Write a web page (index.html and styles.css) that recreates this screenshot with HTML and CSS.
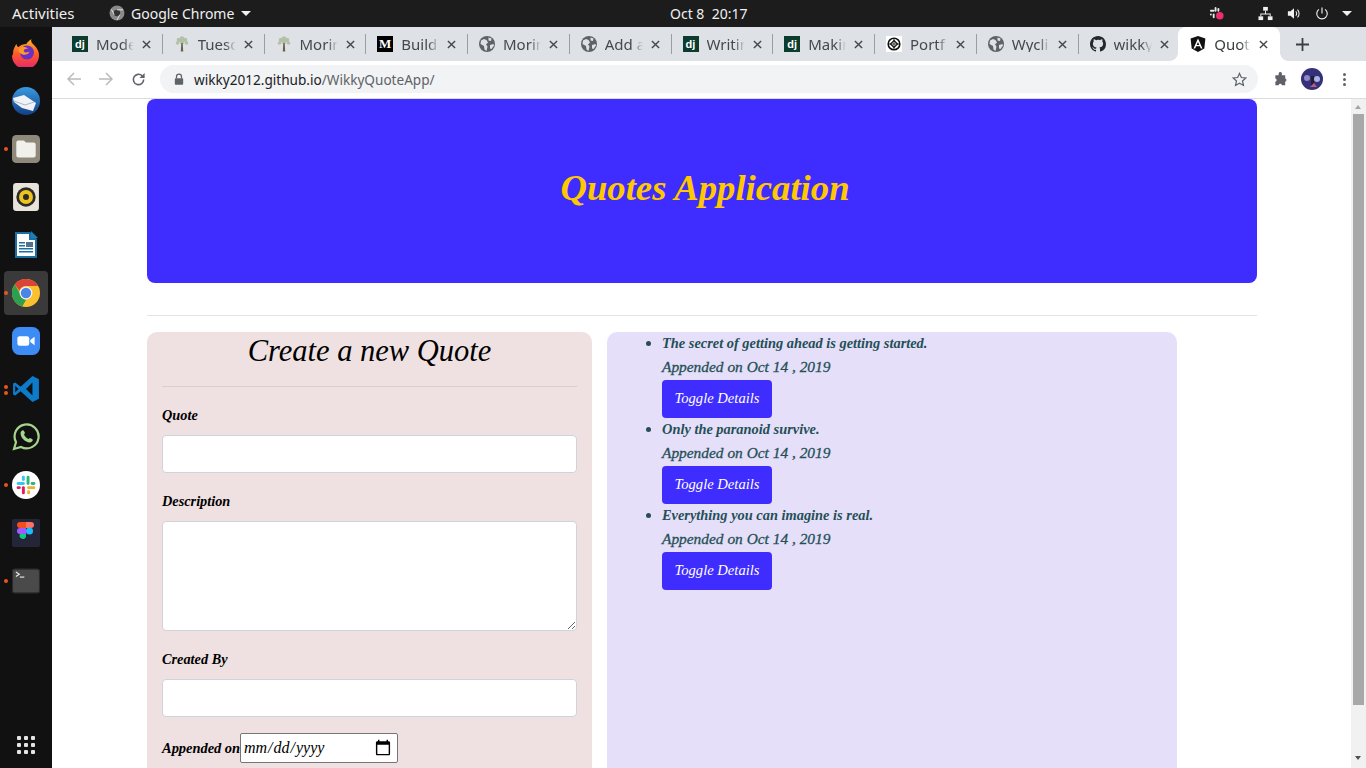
FILE: index.html
```html
<!DOCTYPE html>
<html lang="en">
<head>
<meta charset="utf-8">
<title>Quotes Application</title>
<link rel="stylesheet" href="styles.css">
</head>
<body>
<svg class="defs-holder" viewBox="0 0 16 16">
  <symbol id="globe" viewBox="0 0 16 16"><circle cx="8" cy="8" r="8" fill="#5f6368"/><path d="M2 4.500l3-1.500 2.500 1L9 6.500 7 8.500l1.500 2L7.500 15l-2-1.500-.5-3.500L1.500 8zM9.500 1.500l3 1-.5 2.500-2.500-.5zM11 9l3.500-1 .5 1.500-2.500 3.500-1.500-.5z" fill="#dee1e6"/></symbol>
  <symbol id="close" viewBox="0 0 10 10"><path d="M1 1l8 8M9 1l-8 8" stroke="#45494e" stroke-width="1.600" fill="none"/></symbol>
  <symbol id="tree" viewBox="0 0 16 16"><g fill="#b4c0a8"><circle cx="5" cy="4" r="2.300"/><circle cx="11" cy="4" r="2.300"/><circle cx="8" cy="2.500" r="2.200"/><circle cx="3.500" cy="7" r="1.800"/><circle cx="12.500" cy="7" r="1.800"/><circle cx="8" cy="6" r="2.200"/></g><path d="M7.300 7h1.400l.5 8.500H6.800z" fill="#6b6048"/></symbol>
</svg>

<div class="topbar">
  <div class="top-left">
    <span class="activities">Activities</span>
    <span class="appname">
      <svg class="chrome-mono" viewBox="0 0 16 16"><circle cx="8" cy="8" r="7.500" fill="#8a8a8a"/><circle cx="8" cy="8" r="3.200" fill="#333"/><path d="M8 4.800h6M5.200 9.600 2.400 4.400M10.800 9.600 8 15" stroke="#ddd" stroke-width="1" fill="none"/></svg>
      Google Chrome
      <span class="caret"></span>
    </span>
  </div>
  <div class="clock">Oct 8&nbsp; 20:17</div>
  <div class="tray">
    <svg class="tray-slack" viewBox="0 0 16 16"><g fill="#e8e8e8"><rect x="1" y="4" width="5" height="2" rx="1"/><rect x="6" y="1" width="2" height="5" rx="1"/><rect x="1" y="8" width="2" height="2" rx="1"/><rect x="4" y="8" width="2" height="5" rx="1"/><rect x="9" y="2" width="2" height="4" rx="1"/></g><circle cx="11.500" cy="10.500" r="4" fill="#ee2f6e"/></svg>
    <svg class="tray-net" viewBox="0 0 16 16"><g fill="#f0f0f0"><rect x="5.500" y="1" width="5" height="4"/><rect x="0.500" y="11" width="5" height="4"/><rect x="10.500" y="11" width="5" height="4"/><path d="M7.500 5h1v3h5v3h-1V9H3.500v2h-1V8h5z"/></g></svg>
    <svg class="tray-vol" viewBox="0 0 16 16"><path d="M1 5.500h3L8 2v12L4 10.500H1z" fill="#f0f0f0"/><path d="M10 5.500a3.500 3.500 0 0 1 0 5M12 3.500a6.500 6.500 0 0 1 0 9" stroke="#f0f0f0" fill="none" stroke-width="1.200"/></svg>
    <svg class="tray-power" viewBox="0 0 16 16"><path d="M8 1v7" stroke="#f0f0f0" stroke-width="1.300"/><path d="M4.500 3.300a6 6 0 1 0 7 0" stroke="#f0f0f0" stroke-width="1.300" fill="none"/></svg>
    <span class="caret"></span>
  </div>
</div>

<div class="desktop">
  <nav class="dock">
    <div class="dock-list">
      <div class="dock-item"><svg viewBox="0 0 28 28"><defs><linearGradient id="ff" x1="0.500" y1="0" x2="0.500" y2="1"><stop offset="0" stop-color="#ffb81f"/><stop offset="0.5" stop-color="#ff5a2b"/><stop offset="1" stop-color="#e3246e"/></linearGradient></defs><path d="M1 15C1 10 3 7 4.500 5c.2 2 1 3 2 3 2-2 5-3 8-3 0-1 2-3 5-5-1 2 0 4 2.500 6 3 3 5 6 5 10a13.500 13.500 0 0 1-27 1z" fill="url(#ff)"/><circle cx="15" cy="13.500" r="7" fill="#6a2fc4"/><path d="M6.500 10c3-3 7-2.500 10-.5-3 0-5.500 1-4.500 3 1 1.500 3.500 1 5.500 0-1 3.500-6.500 4.500-9.500 1.500-1.500-1.500-1.500-3-1.500-4z" fill="#ff9a2b"/></svg></div>
      <div class="dock-item"><svg viewBox="0 0 28 28"><defs><linearGradient id="tb" x1="0" y1="0" x2="0" y2="1"><stop offset="0" stop-color="#3a9ae0"/><stop offset="1" stop-color="#123f86"/></linearGradient></defs><circle cx="14" cy="14" r="14" fill="url(#tb)"/><path d="M1 11l11-3 12 8-3 8-11-3-8-6z" fill="#f0f2f6"/><path d="M2 14l11 4 9-3" stroke="#a9b6c6" fill="none"/></svg></div>
      <div class="dock-item dock-dot"><svg viewBox="0 0 26 26"><rect width="26" height="26" rx="4" fill="#8e897b"/><path d="M4 7a2 2 0 0 1 2-2h5l2 2h7a2 2 0 0 1 2 2v10a2 2 0 0 1-2 2H6a2 2 0 0 1-2-2z" fill="#f2f0ec"/></svg></div>
      <div class="dock-item"><svg viewBox="0 0 24 26"><rect width="24" height="26" rx="3" fill="#e8e4da"/><circle cx="12" cy="13" r="9" fill="#2a2a2a"/><circle cx="12" cy="13" r="6.500" fill="#eec21f"/><circle cx="12" cy="13" r="2.800" fill="#2a2a2a"/></svg></div>
      <div class="dock-item"><svg viewBox="0 0 24 28"><path d="M1 1h15l7 7v19H1z" fill="#1b6fa3"/><path d="M3 3h12v6h6v16H3z" fill="#fff"/><path d="M17 0l7 7h-7z" fill="#1b80b8"/><path d="M5 11h6v1.500H5zM5 14h6v1.500H5zM5 17h14v1.500H5zM5 20h14v1.500H5z" fill="#1b6fa3"/><rect x="12" y="11" width="7" height="5" fill="#53718a"/></svg></div>
      <div class="dock-item active dock-dot"><svg viewBox="0 0 26 26"><circle cx="13" cy="13" r="13" fill="#fbc02d"/><path d="M13 0a13 13 0 0 1 11.260 6.500H13a6.500 6.500 0 0 0-6.100 4.300L2.700 5A13 13 0 0 1 13 0z" fill="#dc4437"/><path d="M2.700 5l5.600 9.800A6.500 6.500 0 0 0 13 19.500l-3.500 6A13 13 0 0 1 2.700 5z" fill="#2e9e4f"/><circle cx="13" cy="13" r="6" fill="#f2f2f2"/><circle cx="13" cy="13" r="4.800" fill="#4a86e8"/></svg></div>
      <div class="dock-item"><svg viewBox="0 0 26 26"><rect width="26" height="26" rx="7" fill="#3d8bf5"/><rect x="5" y="8.500" width="11" height="9" rx="2" fill="#fff"/><path d="M17 12l4-3v8l-4-3z" fill="#fff"/></svg></div>
      <div class="dock-item dock-dots"><svg viewBox="0 0 26 26"><path d="M19 1l6 3v18l-6 3L8 15l-5 4-2-1V8l2-1 5 4z" fill="#0d7bc9"/><path d="M19 7l-6 6 6 6z" fill="#111"/><path d="M3 10l3 3-3 3z" fill="#111"/></svg></div>
      <div class="dock-item"><svg viewBox="0 0 28 28"><path d="M2 26l2-7a12 12 0 1 1 5 5z" fill="none" stroke="#a5d58c" stroke-width="2.200"/><path d="M9.500 8c1-1 2-1 2.500 0l1 2-1 1.500c1 2 2.500 3.500 4.500 4.500l1.500-1 2 1c1 .5 1 1.500 0 2.500-2 2-6 .5-8.500-2S7.500 10 9.500 8z" fill="#a5d58c"/></svg></div>
      <div class="dock-item dock-dot"><svg viewBox="0 0 24 24"><circle cx="12" cy="12" r="12" fill="#fff"/><rect x="4" y="9.500" width="7" height="2.500" rx="1.200" fill="#36c5f0"/><rect x="8.500" y="4" width="2.500" height="4.500" rx="1.200" fill="#36c5f0"/><rect x="12.500" y="4" width="2.500" height="8" rx="1.200" fill="#2eb67d"/><rect x="16" y="9.500" width="4" height="2.500" rx="1.200" fill="#2eb67d"/><rect x="13" y="13" width="7" height="2.500" rx="1.200" fill="#ecb22e"/><rect x="13" y="16.500" width="2.500" height="3.500" rx="1.200" fill="#ecb22e"/><rect x="8.500" y="13" width="2.500" height="7" rx="1.200" fill="#e01e5a"/><rect x="4" y="13" width="3.500" height="2.500" rx="1.200" fill="#e01e5a"/></svg></div>
      <div class="dock-item"><svg viewBox="0 0 28 28"><rect width="28" height="28" rx="2" fill="#242538"/><path d="M8 3h6v6H8a3 3 0 0 1 0-6z" fill="#f24e1e"/><path d="M14 3h5a3 3 0 0 1 0 6h-5z" fill="#ff7262"/><path d="M8 9h6v6H8a3 3 0 0 1 0-6z" fill="#a259ff"/><circle cx="17.500" cy="12" r="3.500" fill="#1abcfe"/><path d="M8 15h6v3a3 3 0 1 1-6-3z" fill="#0acf83"/></svg></div>
      <div class="dock-item dock-dot"><svg viewBox="0 0 25 22"><rect width="25" height="22" rx="2.500" fill="#4a4a4a"/><rect x=".5" y=".5" width="24" height="21" rx="2" fill="none" stroke="#2b2b2b"/><path d="M3.500 3l3 2-3 2" stroke="#eee" fill="none"/><path d="M7 7.500h4" stroke="#eee"/></svg></div>
    </div>
    <svg class="grid-icon" viewBox="0 0 18 18"><g fill="#e4e4e4"><rect x="0" y="0" width="4" height="4" rx="1"/><rect x="7" y="0" width="4" height="4" rx="1"/><rect x="14" y="0" width="4" height="4" rx="1"/><rect x="0" y="7" width="4" height="4" rx="1"/><rect x="7" y="7" width="4" height="4" rx="1"/><rect x="14" y="7" width="4" height="4" rx="1"/><rect x="0" y="14" width="4" height="4" rx="1"/><rect x="7" y="14" width="4" height="4" rx="1"/><rect x="14" y="14" width="4" height="4" rx="1"/></g></svg>
  </nav>

  <div class="browser">
    <div class="tabstrip">
      <div class="tab"><span class="fav fav-dj">dj</span><span class="tab-title">Mode</span><svg class="x" viewBox="0 0 10 10"><use href="#close"/></svg></div>
      <div class="tab"><svg class="fav" viewBox="0 0 16 16"><use href="#tree"/></svg><span class="tab-title">Tuesd</span><svg class="x" viewBox="0 0 10 10"><use href="#close"/></svg></div>
      <div class="tab"><svg class="fav" viewBox="0 0 16 16"><use href="#tree"/></svg><span class="tab-title">Morin</span><svg class="x" viewBox="0 0 10 10"><use href="#close"/></svg></div>
      <div class="tab"><span class="fav fav-m">M</span><span class="tab-title">Build</span><svg class="x" viewBox="0 0 10 10"><use href="#close"/></svg></div>
      <div class="tab"><svg class="fav" viewBox="0 0 16 16"><use href="#globe"/></svg><span class="tab-title">Morin</span><svg class="x" viewBox="0 0 10 10"><use href="#close"/></svg></div>
      <div class="tab"><svg class="fav" viewBox="0 0 16 16"><use href="#globe"/></svg><span class="tab-title">Add a</span><svg class="x" viewBox="0 0 10 10"><use href="#close"/></svg></div>
      <div class="tab"><span class="fav fav-dj">dj</span><span class="tab-title">Writin</span><svg class="x" viewBox="0 0 10 10"><use href="#close"/></svg></div>
      <div class="tab"><span class="fav fav-dj">dj</span><span class="tab-title">Makin</span><svg class="x" viewBox="0 0 10 10"><use href="#close"/></svg></div>
      <div class="tab"><svg class="fav" viewBox="0 0 16 16"><rect width="16" height="16" rx="1" fill="#fff"/><circle cx="8" cy="8" r="5.800" fill="none" stroke="#111" stroke-width="1.600"/><path d="M8 4.500L11.500 8 8 11.500 4.500 8z" fill="none" stroke="#111" stroke-width="1.200"/><path d="M8 2v12M2 8h12" stroke="#111" stroke-width=".8"/></svg><span class="tab-title">Portf</span><svg class="x" viewBox="0 0 10 10"><use href="#close"/></svg></div>
      <div class="tab"><svg class="fav" viewBox="0 0 16 16"><use href="#globe"/></svg><span class="tab-title">Wycli</span><svg class="x" viewBox="0 0 10 10"><use href="#close"/></svg></div>
      <div class="tab last-plain"><svg class="fav" viewBox="0 0 16 16"><path fill="#24292e" d="M8 0C3.580 0 0 3.580 0 8c0 3.540 2.290 6.530 5.470 7.590.4.070.55-.170.550-.380v-1.340c-2.230.480-2.700-1.070-2.700-1.070-.360-.930-.890-1.170-.890-1.170-.730-.500.060-.490.060-.490.800.060 1.230.830 1.230.830.710 1.220 1.870.870 2.330.660.070-.520.280-.870.510-1.070-1.780-.200-3.640-.890-3.640-3.950 0-.870.310-1.590.820-2.150-.080-.200-.360-1.020.080-2.120 0 0 .670-.210 2.200.820A7.600 7.600 0 0 1 8 3.870c.680 0 1.360.090 2 .270 1.530-1.040 2.200-.820 2.200-.820.440 1.100.160 1.920.080 2.120.510.560.820 1.270.820 2.150 0 3.070-1.870 3.750-3.650 3.950.290.250.540.730.540 1.480v2.190c0 .210.150.460.550.380A8 8 0 0 0 16 8c0-4.420-3.580-8-8-8z"/></svg><span class="tab-title">wikky</span><svg class="x" viewBox="0 0 10 10"><use href="#close"/></svg></div>
      <div class="tab active-tab"><svg class="fav" viewBox="0 0 16 16"><path d="M8 0l7.400 2.600-1.100 9.800L8 16l-6.300-3.600L.6 2.600z" fill="#111"/><path d="M8 2.500L3.500 12.500h1.700l.9-2.300h3.800l.9 2.300h1.700zM8 6l1.300 3H6.700z" fill="#fff"/></svg><span class="tab-title">Quot</span><svg class="x" viewBox="0 0 10 10"><use href="#close"/></svg></div>
      <div class="newtab"><svg class="plus" viewBox="0 0 13 13"><path d="M6.500 0v13M0 6.500h13" stroke="#3c4043" stroke-width="1.800"/></svg></div>
    </div>

    <div class="toolbar">
      <svg class="nav-ic" viewBox="0 0 14 14"><path d="M14 7H1.500M7 1L1 7l6 6" fill="none" stroke="#b8babd" stroke-width="1.500"/></svg>
      <svg class="nav-ic" viewBox="0 0 14 14"><path d="M0 7h12.500M7 1l6 6-6 6" fill="none" stroke="#b8babd" stroke-width="1.500"/></svg>
      <svg class="nav-ic" viewBox="0 0 16 16"><path d="M13.500 8a5.500 5.500 0 1 1-1.600-3.900" fill="none" stroke="#5f6368" stroke-width="1.700"/><path d="M14.500 1v5.500H9z" fill="#5f6368"/></svg>
      <div class="omnibox">
        <svg class="lock" viewBox="0 0 12 14"><path d="M3 6V4a3 3 0 0 1 6 0v2" fill="none" stroke="#5f6368" stroke-width="1.500"/><rect x="1" y="6" width="10" height="8" rx="1" fill="#5f6368"/></svg>
        <span class="url"><span class="host">wikky2012.github.io</span>/WikkyQuoteApp/</span>
        <svg class="star" viewBox="0 0 16 16"><path d="M8 1.500l2 4.400 4.700.5-3.500 3.200 1 4.700L8 11.900l-4.200 2.400 1-4.700L1.300 6.400 6 5.900z" fill="none" stroke="#5f6368" stroke-width="1.300"/></svg>
      </div>
      <svg class="ext" viewBox="0 0 16 16"><path d="M6 1.500a1.800 1.800 0 0 1 3.500 0V3.500H13v3.300a1.800 1.800 0 0 1 0 3.500V14H9.500a1.800 1.800 0 0 0-3.500 0H2.500V10.500a1.800 1.800 0 0 0 0-3.500V3.500H6z" fill="#5f6368"/></svg>
      <svg class="avatar" viewBox="0 0 22 22"><circle cx="11" cy="11" r="11" fill="#35307a"/><circle cx="6" cy="10" r="3" fill="#8d8ac0"/><rect x="10" y="8" width="3" height="11" fill="#211c3c"/><circle cx="16" cy="11" r="3" fill="#a9b3dd"/><path d="M9 19l4-4 3 4z" fill="#c05a7a"/></svg>
      <div class="kebab"><i></i><i></i><i></i></div>
    </div>

    <div class="viewport">
      <main class="page">
        <div class="container">
          <header class="hero"><h1>Quotes Application</h1></header>
          <hr class="rule">
          <div class="columns">
            <section class="form-card">
              <h2>Create a new Quote</h2>
              <hr class="form-rule">
              <label class="lbl">Quote</label>
              <input class="ctl" type="text">
              <label class="lbl">Description</label>
              <textarea class="ctl area"></textarea>
              <label class="lbl">Created By</label>
              <input class="ctl" type="text">
              <div class="date-row">
                <label class="lbl inline">Appended on</label>
                <input class="date" type="date">
              </div>
            </section>
            <section class="list-card">
              <ul class="quotes">
                <li>
                  <div class="q">The secret of getting ahead is getting started.</div>
                  <div class="d">Appended on Oct 14 , 2019</div>
                  <button class="btn">Toggle Details</button>
                </li>
                <li>
                  <div class="q">Only the paranoid survive.</div>
                  <div class="d">Appended on Oct 14 , 2019</div>
                  <button class="btn">Toggle Details</button>
                </li>
                <li>
                  <div class="q">Everything you can imagine is real.</div>
                  <div class="d">Appended on Oct 14 , 2019</div>
                  <button class="btn">Toggle Details</button>
                </li>
              </ul>
            </section>
          </div>
        </div>
      </main>
      <div class="scrollbar">
        <div class="sb-up"></div>
        <div class="sb-thumb"></div>
        <div class="sb-down"></div>
      </div>
    </div>
  </div>
</div>
</body>
</html>
```

FILE: styles.css
```css
* { box-sizing: border-box; }
html, body { margin: 0; height: 768px; overflow: hidden; }
body { font-family: "Noto Sans", "Liberation Sans", sans-serif; background: #111; }
.defs-holder { width: 0; height: 0; position: absolute; }

.topbar {
  height: 27px; background: #1c1c1c; color: #f0f0f0; font-size: 14px;
  display: grid; grid-template-columns: 670px auto 1fr; align-items: center;
  padding-bottom: 1px;
}
.top-left { display: flex; align-items: center; padding-left: 12px; }
.activities { width: 97px; font-size: 15px; }
.appname { display: flex; align-items: center; gap: 6px; }
.chrome-mono { width: 16px; height: 16px; }
.caret { width: 0; height: 0; border-left: 5px solid transparent; border-right: 5px solid transparent; border-top: 5px solid #f0f0f0; display: inline-block; margin-left: 1px; }
.tray { display: flex; align-items: center; justify-content: flex-end; padding-right: 14px; }
.tray-slack { width: 15px; height: 15px; margin-right: 34px; }
.tray-net { width: 15px; height: 15px; margin-right: 14px; }
.tray-vol { width: 14px; height: 15px; margin-right: 14px; }
.tray-power { width: 14px; height: 15px; margin-right: 12px; }

.desktop { display: flex; height: 741px; }
.dock { width: 52px; background: #111; display: flex; flex-direction: column; justify-content: space-between; align-items: center; padding-bottom: 14px; }
.dock-list { display: flex; flex-direction: column; padding-top: 4px; }
.dock-item { width: 44px; height: 44px; margin-bottom: 4px; display: flex; align-items: center; justify-content: center; position: relative; border-radius: 4px; }
.dock-item svg { width: 28px; height: 28px; }
.dock-item.active { background: #3a3a3a; }
.dock-dot::before { content: ""; position: absolute; left: 0; top: 20px; width: 4px; height: 4px; border-radius: 50%; background: #e9541f; }
.dock-dots::before { content: ""; position: absolute; left: 0; top: 18px; width: 4px; height: 4px; border-radius: 50%; background: #e9541f; box-shadow: 0 6px 0 #e9541f; }
.grid-icon { width: 18px; height: 18px; }

.browser { flex: 1; min-width: 0; display: flex; flex-direction: column; background: #fff; }

.tabstrip { height: 34px; background: #dee1e6; display: flex; align-items: flex-start; padding-left: 9px; flex: none; }
.tab { width: 101.750px; height: 34px; padding: 9px 0 0 11px; display: flex; align-items: flex-start; position: relative; font-size: 15px; color: #45494e; flex: none; }
.tab::after { content: ""; position: absolute; right: 0; top: 7px; height: 20px; width: 1px; background: #9a9da2; }
.last-plain::after { display: none; }
.fav { width: 16px; height: 16px; flex: none; }
.fav-dj { background: #0c3c2e; color: #fff; font-size: 11px; font-weight: 700; text-align: center; line-height: 16px; font-family: "Liberation Sans", sans-serif; }
.fav-m { background: #000; color: #fff; font-size: 13px; font-weight: 700; text-align: center; line-height: 16px; font-family: "Liberation Serif", serif; }
.tab-title {
  margin-left: 8px; width: 38px; white-space: nowrap; line-height: 16px; flex: none;
  -webkit-mask-image: linear-gradient(90deg, #000 72%, transparent 100%);
  mask-image: linear-gradient(90deg, #000 72%, transparent 100%);
}
.x { width: 9px; height: 9px; margin-left: 8px; margin-top: 4px; flex: none; }
.active-tab { background: #fff; border-radius: 8px 8px 0 0; color: #3c4043; padding-left: 12px; margin-left: -2px; }
.active-tab .tab-title { width: 37px; }
.active-tab::before,
.active-tab::after { content: ""; position: absolute; top: auto; bottom: 0; width: 8px; height: 8px; }
.active-tab::before { left: -8px; background: radial-gradient(circle at 0 0, transparent 7.500px, #fff 8px); }
.active-tab::after { right: -8px; background: radial-gradient(circle at 100% 0, transparent 7.500px, #fff 8px); }
.newtab { width: 46px; height: 34px; flex: none; display: flex; align-items: center; justify-content: center; padding-right: 1px; }
.plus { width: 13px; height: 13px; }

.toolbar { height: 38px; background: #fff; display: flex; align-items: center; padding: 0 0 1px 15px; flex: none; border-bottom: 1px solid #dadce0; }
.nav-ic { width: 14px; height: 14px; margin-right: 18px; flex: none; }
.nav-ic:nth-child(3) { width: 15px; height: 15px; margin-right: 14px; }
.omnibox { width: 1098px; height: 28px; border-radius: 14px; background: #f1f3f4; display: flex; align-items: center; padding: 0 11px 0 14px; flex: none; }
.lock { width: 10px; height: 12px; flex: none; }
.url { margin-left: 10px; font-size: 13.600px; color: #5f6368; flex: 1; }
.host { color: #202124; }
.star { width: 15px; height: 15px; }
.ext { width: 15px; height: 15px; margin-left: 15px; flex: none; }
.avatar { width: 22px; height: 22px; margin-left: 13px; flex: none; }
.kebab { display: flex; flex-direction: column; gap: 2px; margin-left: 20px; }
.kebab i { width: 3px; height: 3px; border-radius: 50%; background: #5f6368; display: block; }

.viewport { flex: 1; min-height: 0; display: flex; overflow: hidden; }
.page { flex: 1; min-width: 0; overflow: hidden; font-family: "Liberation Serif", serif; font-style: italic; }
.container { width: 1110px; margin-left: 95px; }

.hero { height: 184px; background: #3f2cff; border-radius: 8px; display: flex; align-items: center; justify-content: center; padding-left: 6px; }
.hero h1 { margin: 0 0 6px; font-size: 36.700px; font-weight: 700; color: #ffc800; line-height: 48px; }

.rule { border: 0; border-top: 1px solid #e2e4e6; margin: 32px 0 16px; }

.columns { display: flex; align-items: flex-start; gap: 15px; }
.form-card { width: 445px; height: 560px; background: #efe0e1; border-radius: 10px 10px 0 0; padding: 0 15px; flex: none; }
.form-card h2 { margin: 0; text-align: center; font-size: 30.500px; font-weight: 400; line-height: 38px; color: #000; }
.form-rule { border: 0; border-top: 1px solid #d5cfd2; margin: 16px 0; }
.lbl { display: block; font-size: 14.300px; font-weight: 700; color: #000; line-height: 24px; margin-bottom: 8px; }
.ctl { display: block; width: 100%; height: 38px; border: 1px solid #ced4da; border-radius: 4px; background: #fff; margin-bottom: 16px; padding: 0; }
.area { height: 110px; resize: vertical; }
.date-row { display: flex; align-items: center; }
.lbl.inline { margin: 0; white-space: nowrap; width: 78px; font-size: 14.500px; letter-spacing: -.04px; }
.date { width: 158px; height: 30px; border: 1px solid #767676; border-radius: 2px; background: #fff; font-family: "Liberation Serif", serif; font-style: italic; font-size: 16px; padding: 0 2px; color: #000; }
.date::-webkit-calendar-picker-indicator { width: 18px; height: 18px; padding: 0; margin-right: 3px; }

.list-card { width: 570px; height: 560px; background: #e6dffa; border-radius: 10px 10px 0 0; flex: none; }
.quotes { margin: 0; padding: 0 0 0 55px; color: #234f55; list-style: disc; font-size: 16px; }
.q { line-height: 22px; padding-bottom: 2px; font-size: 14.400px; font-weight: 700; }
.d { line-height: 22px; padding-bottom: 2px; font-size: 15.400px; -webkit-text-stroke: .3px #234f55; }
.btn { display: block; width: 110px; height: 38px; background: #3f2cff; color: #fff; border: 0; border-radius: 4px; font-family: "Liberation Serif", serif; font-style: italic; font-size: 14.600px; padding: 0 0 2px; }

.scrollbar { width: 15px; flex: none; background: #f1f1f1; display: flex; flex-direction: column; padding: 0 2px; }
.sb-up, .sb-down { height: 15px; flex: none; position: relative; }
.sb-up::after { content: ""; position: absolute; left: 2px; top: 6px; border-left: 3.500px solid transparent; border-right: 3.500px solid transparent; border-bottom: 4px solid #a3a3a3; }
.sb-down { margin-top: auto; margin-bottom: 2px; }
.sb-down::after { content: ""; position: absolute; left: 2px; top: 5px; border-left: 3.500px solid transparent; border-right: 3.500px solid transparent; border-top: 4px solid #505050; }
.sb-thumb { height: 591px; background: #a8a8a8; flex: none; }
```
